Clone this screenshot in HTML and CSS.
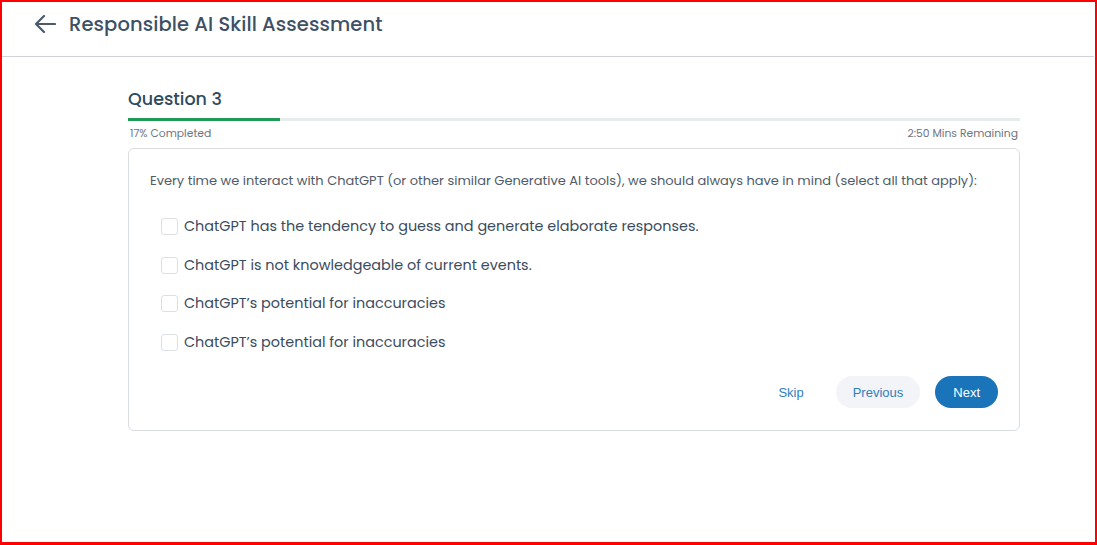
FILE: index.html
```html
<!DOCTYPE html>
<html>
<head>
<meta charset="utf-8">
<link rel="stylesheet" href="styles.css">
</head>
<body>
<div class="frame">
  <header class="topbar">
    <svg class="back" width="22" height="20" viewBox="0 0 22 20"><path d="M21 10H2M10 2L2 10L10 18" fill="none" stroke="#4a5a6c" stroke-width="2.2" stroke-linecap="round" stroke-linejoin="round"/></svg>
    <h1 class="title">Responsible AI Skill Assessment</h1>
  </header>
  <main class="content">
    <h2 class="qtitle">Question 3</h2>
    <div class="track"><div class="fill" style="width:17%"></div></div>
    <div class="meta"><span>17% Completed</span><span>2:50 Mins Remaining</span></div>
    <section class="card">
      <p class="prompt">Every time we interact with ChatGPT (or other similar Generative AI tools), we should always have in mind (select all that apply):</p>
      <ul class="options">
        <li class="opt"><span class="box"></span>ChatGPT has the tendency to guess and generate elaborate responses.</li>
        <li class="opt"><span class="box"></span>ChatGPT is not knowledgeable of current events.</li>
        <li class="opt"><span class="box"></span>ChatGPT’s potential for inaccuracies</li>
        <li class="opt"><span class="box"></span>ChatGPT’s potential for inaccuracies</li>
      </ul>
      <div class="actions">
        <button class="btn skip">Skip</button>
        <button class="btn prev">Previous</button>
        <button class="btn next">Next</button>
      </div>
    </section>
  </main>
</div>
</body>
</html>
```
FILE: styles.css
```css
html, body { margin: 0; padding: 0; background: #fff; }
body { font-family: "Poppins", "Inter", "Noto Sans", sans-serif; }
.frame {
  width: 1097px; height: 545px; box-sizing: border-box;
  border: 2px solid #ff0000; border-bottom-width: 3px;
  overflow: hidden;
}
.topbar {
  height: 54px; display: flex; align-items: center;
  padding-left: 32px; gap: 13px;
  border-bottom: 1px solid #d0d1dc;
  margin-right: 1px;
}
.back { margin-top: -10px; }
.title {
  margin: 0; margin-top: -10px; font-size: 19.5px; font-weight: 500; color: #3e5064; letter-spacing: 0.1px;
}
.content { width: 892px; margin: 0 0 0 126px; padding-top: 31px; }
.qtitle { margin: 0; font-size: 17.5px; font-weight: 500; color: #2e4a5e; line-height: 22px; }
.track { margin-top: 8px; height: 3px; background: #e9eced; }
.fill { height: 3px; background: #1f9a57; }
.meta {
  display: flex; justify-content: space-between; margin-top: 6px;
  font-size: 10.8px; color: #6e7681; padding: 0 2px 0 2px; line-height: 14px;
}
.card {
  margin-top: 7px; border: 1px solid #d9dde2; border-radius: 6px;
  padding: 23px 21px 22px 21px; height: 283px; box-sizing: border-box;
}
.prompt { margin: 0; font-size: 13px; color: #4f5b68; line-height: 18px; }
.options { list-style: none; margin: 26px 0 0 11px; padding: 0; display: flex; flex-direction: column; gap: 17.5px; }
.opt { display: flex; align-items: center; gap: 6px; font-size: 14.4px; color: #3b4b5d; line-height: 21px; }
.box { width: 15px; height: 15px; border: 1px solid #dcdfe4; border-radius: 3px; flex: none; }
.actions { display: flex; justify-content: flex-end; align-items: center; margin-top: 23.5px; gap: 15px; }
.btn {
  font-family: "Liberation Sans", Arial, sans-serif; font-size: 13px; border: none;
  height: 32px; border-radius: 16px; padding: 0 17px; cursor: pointer;
}
.skip { background: transparent; color: #2f7fc0; }
.prev { background: #f2f4f7; color: #2f7fc0; }
.next { background: #1a74b9; color: #fff; padding: 0 18px; }
```
